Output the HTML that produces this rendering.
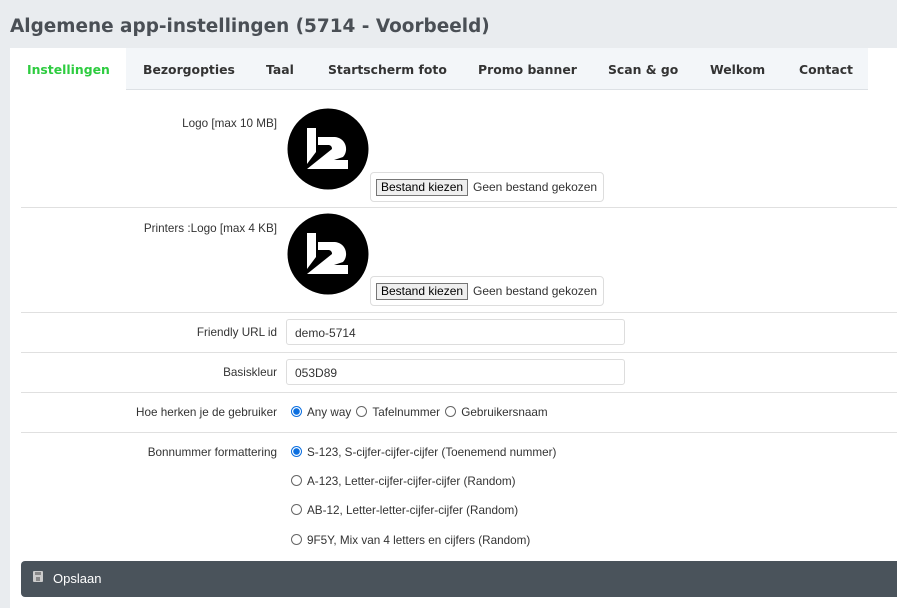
<!DOCTYPE html>
<html><head><meta charset="utf-8"><style>
*{box-sizing:border-box;margin:0;padding:0}
body{width:897px;height:603px;overflow:hidden;background:#e9ecef;font-family:"Liberation Sans",Arial,sans-serif;font-size:11.7px;color:#333;position:relative}
h1{position:absolute;left:10px;top:16px;font-family:"DejaVu Sans",Verdana,sans-serif;font-weight:bold;font-size:18.45px;color:#4a4f55}
.panel{position:absolute;left:10px;top:48px;width:887px;height:560px;background:#fff}
.tabs{position:absolute;left:0;top:0;width:858px;height:42px;background:#f3f6f9;border-bottom:1px solid #dde1e5}
.tab{position:absolute;top:14px;font-family:"DejaVu Sans",Verdana,sans-serif;font-weight:bold;font-size:12.4px;color:#333}
.tab.active{color:#2ecc40}
.activebg{position:absolute;left:0;top:0;width:116px;height:43px;background:#fff}
.line{position:absolute;left:11px;right:0;height:1px;background:#e0e0e0}
.lbl{position:absolute;right:620px;text-align:right;white-space:nowrap}
.abs{position:absolute;white-space:nowrap}
.file{position:absolute;width:234px;height:30px;border:1px solid #ddd;border-radius:4px;background:#fff}
.file .btn{position:absolute;left:5px;top:6px;height:17px;padding:0 4px;border:1px solid #767676;background:#efefef;font-size:12px;line-height:15px;color:#000}
.file .t{position:absolute;left:102px;top:7px;font-size:12px;color:#333}
.inp{position:absolute;left:276px;width:339px;height:26px;border:1px solid #ddd;border-radius:3px;padding:6px 8px;font-size:12px}
.r{display:inline-block;width:11px;height:11px;border:1px solid #666;border-radius:50%;vertical-align:-1px;margin-right:5px;background:#fff}
.r.on{border:1px solid #0b6fe0;background:radial-gradient(circle,#0b6fe0 0 3px,#fff 3.5px)}
.save{position:absolute;left:11px;top:513px;width:880px;height:36px;background:#4a535b;border-radius:4px;color:#fff;font-size:13px}
</style></head><body>
<h1>Algemene app-instellingen (5714 - Voorbeeld)</h1>
<div class="panel">
 <div class="tabs">
  <div class="activebg"></div>
  <span class="tab active" style="left:17px">Instellingen</span>
  <span class="tab" style="left:133px">Bezorgopties</span>
  <span class="tab" style="left:256px">Taal</span>
  <span class="tab" style="left:318px">Startscherm foto</span>
  <span class="tab" style="left:468px">Promo banner</span>
  <span class="tab" style="left:598px">Scan &amp; go</span>
  <span class="tab" style="left:700px">Welkom</span>
  <span class="tab" style="left:789px">Contact</span>
 </div>

 <div class="lbl" style="top:69px;right:620px">Logo [max 10 MB]</div>
 <svg class="abs" style="left:277px;top:60px" width="82" height="82" viewBox="0 0 82 82"><circle cx="41" cy="41" r="40.5" fill="#000"/><path d="M20 20h9v24l-9 12z" fill="#fff"/><path d="M31 29H48A12 12 0 0 1 56 49L47 52H61V61H20L45 41A4 4 0 0 0 42 37H31Z" fill="#fff"/></svg>
 <div class="file" style="left:360px;top:124px"><span class="btn">Bestand kiezen</span><span class="t">Geen bestand gekozen</span></div>
 <div class="line" style="top:159px"></div>

 <div class="lbl" style="top:174px">Printers :Logo [max 4 KB]</div>
 <svg class="abs" style="left:277px;top:165px" width="82" height="82" viewBox="0 0 82 82"><circle cx="41" cy="41" r="40.5" fill="#000"/><path d="M20 20h9v24l-9 12z" fill="#fff"/><path d="M31 29H48A12 12 0 0 1 56 49L47 52H61V61H20L45 41A4 4 0 0 0 42 37H31Z" fill="#fff"/></svg>
 <div class="file" style="left:360px;top:228px"><span class="btn">Bestand kiezen</span><span class="t">Geen bestand gekozen</span></div>
 <div class="line" style="top:264px"></div>

 <div class="lbl" style="top:278px">Friendly URL id</div>
 <div class="inp" style="top:271px">demo-5714</div>
 <div class="line" style="top:304px"></div>

 <div class="lbl" style="top:318px">Basiskleur</div>
 <div class="inp" style="top:311px">053D89</div>
 <div class="line" style="top:344px"></div>

 <div class="lbl" style="top:358px">Hoe herken je de gebruiker</div>
 <div class="abs" style="left:281px;top:358px"><span class="r on"></span>Any way <span class="r" style="margin-left:2px"></span>Tafelnummer <span class="r" style="margin-left:2px"></span>Gebruikersnaam</div>
 <div class="line" style="top:384px"></div>

 <div class="lbl" style="top:398px">Bonnummer formattering</div>
 <div class="abs" style="left:281px;top:398px"><span class="r on"></span>S-123, S-cijfer-cijfer-cijfer (Toenemend nummer)</div>
 <div class="abs" style="left:281px;top:427px"><span class="r"></span>A-123, Letter-cijfer-cijfer-cijfer (Random)</div>
 <div class="abs" style="left:281px;top:456px"><span class="r"></span>AB-12, Letter-letter-cijfer-cijfer (Random)</div>
 <div class="abs" style="left:281px;top:486px"><span class="r"></span>9F5Y, Mix van 4 letters en cijfers (Random)</div>

 <div class="save"><span class="abs" style="left:12px;top:10px;width:10px;height:11px;background:#ccc;border-radius:1px"><span class="abs" style="left:2px;top:1px;width:6px;height:3px;background:#888"></span><span class="abs" style="left:3px;top:6px;width:4px;height:4px;background:#888"></span></span><span class="abs" style="left:32px;top:10px">Opslaan</span></div>
</div>
</body></html>
